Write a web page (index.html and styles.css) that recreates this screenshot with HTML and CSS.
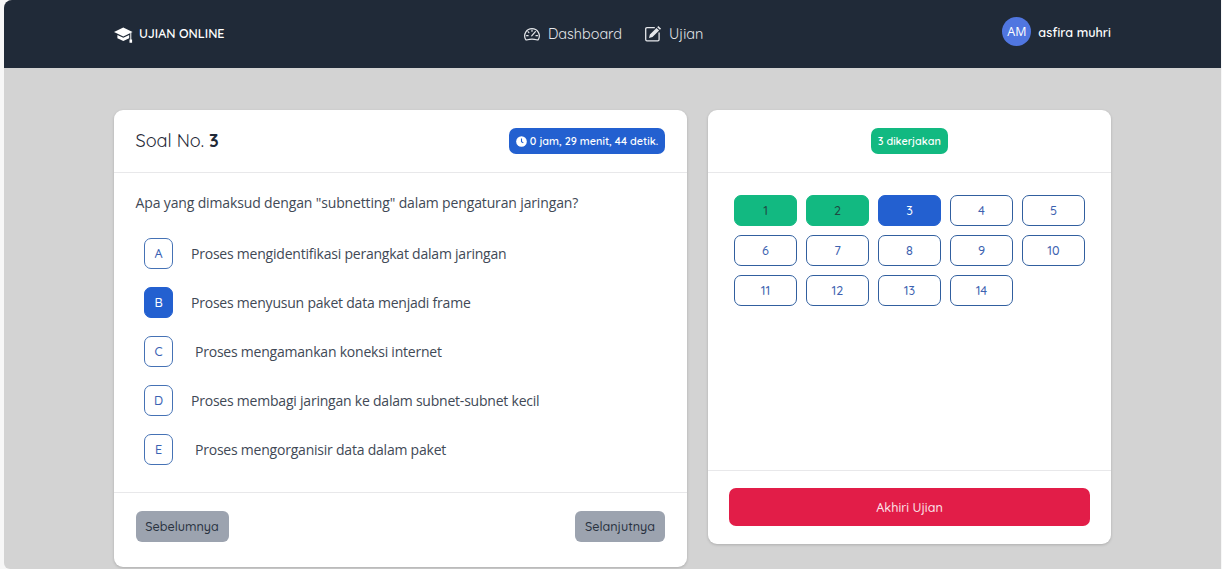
FILE: index.html
```html
<!DOCTYPE html>
<html lang="id">
<head>
<meta charset="utf-8">
<title>Ujian Online</title>
<link rel="stylesheet" href="styles.css">
</head>
<body>
<div class="page">
  <header class="navbar">
    <div class="brand">
      <svg class="brand-icon" viewBox="0 0 19 16"><path fill="currentColor" d="M0 5 9.300.400 18.600 5 9.300 9.500Z"/><path fill="currentColor" d="M3.400 7.900 9.300 10.700l5.900-2.800V11.300L9.300 14 3.400 11.300ZM16.300 5.500h1V12.500h.8v3.300h-2.600v-3.300h.8Z"/></svg>
      <span class="brand-name">UJIAN ONLINE</span>
    </div>
    <nav class="menu">
      <a class="menu-item"><svg class="menu-icon" viewBox="0 0 18 16" fill="none" stroke="currentColor" stroke-width="1.200" stroke-linecap="round"><path d="M2.500 13.300A7.300 7.300 0 1 1 15.500 13.300Q14.800 14.300 13.500 13.800Q9 12.300 4.500 13.800Q3.200 14.300 2.500 13.300Z"/><path d="M9 4v1.300M5 5.700l.9.900M3.600 9.700h1.500M13 9.700h1.500M8.700 9.900l3.700-4.300" /></svg><span>Dashboard</span></a>
      <a class="menu-item"><svg class="menu-icon" viewBox="0 0 18 16" fill="none" stroke="currentColor" stroke-width="1.300"><path d="M10.800 1.700H3Q1.700 1.700 1.700 3v10.500q0 1.300 1.300 1.300h10.800q1.300 0 1.300-1.300V6.500"/><path fill="currentColor" stroke="none" d="M5 12 5.900 8.500 12.500 1.900 15.100 4.500 8.500 11.100ZM13.200 1.200 14.300.1 17.100 2.700 15.900 3.800Z"/></svg><span>Ujian</span></a>
    </nav>
    <div class="user"><span class="avatar">AM</span><span class="user-name">asfira muhri</span></div>
  </header>
  <main class="content">
    <section class="card question-card">
      <div class="card-head">
        <h1 class="title">Soal No. <b>3</b></h1>
        <span class="badge timer"><svg class="clock" viewBox="0 0 12 12"><circle cx="6" cy="6" r="5.800" fill="currentColor"/><path d="M6 2.700V6.200L8 7.500" fill="none" stroke="#2360d0" stroke-width="1.200"/></svg><span>0 jam, 29 menit, 44 detik.</span></span>
      </div>
      <div class="question-body">
        <p class="question">Apa yang dimaksud dengan "subnetting" dalam pengaturan jaringan?</p>
        <div class="options">
          <div class="option"><span class="letter">A</span><span class="answer">Proses mengidentifikasi perangkat dalam jaringan</span></div>
          <div class="option"><span class="letter chosen">B</span><span class="answer">Proses menyusun paket data menjadi frame</span></div>
          <div class="option wide"><span class="letter">C</span><span class="answer">Proses mengamankan koneksi internet</span></div>
          <div class="option"><span class="letter">D</span><span class="answer">Proses membagi jaringan ke dalam subnet-subnet kecil</span></div>
          <div class="option wide"><span class="letter">E</span><span class="answer">Proses mengorganisir data dalam paket</span></div>
        </div>
      </div>
      <div class="question-foot"><span class="btn prev">Sebelumnya</span><span class="btn next">Selanjutnya</span></div>
    </section>
    <section class="card numbers-card">
      <div class="card-head centered"><span class="badge done-badge">3 dikerjakan</span></div>
      <div class="numbers">
        <span class="num done">1</span><span class="num done">2</span><span class="num current">3</span><span class="num">4</span><span class="num">5</span>
        <span class="num">6</span><span class="num">7</span><span class="num">8</span><span class="num">9</span><span class="num">10</span>
        <span class="num">11</span><span class="num">12</span><span class="num">13</span><span class="num">14</span>
      </div>
      <div class="numbers-foot"><span class="finish">Akhiri Ujian</span></div>
    </section>
  </main>
</div>
</body>
</html>
```
FILE: styles.css
```css
* { box-sizing: border-box; }
body { margin: 0; height: 569px; overflow: hidden; background: #f7f7f7; font-family: Quicksand, Lato, sans-serif; color: #1f2937; }
.page { margin: 0 1px 0 4px; height: 569px; background: #d3d3d3; border-radius: 8px 0 0 6px; overflow: hidden; }
.navbar { height: 68px; background: #202a38; color: #fff; display: grid; grid-template-columns: 409px 1fr auto; padding: 0 110px; }
.brand { display: flex; align-items: center; gap: 6px; height: 66px; }
.brand-icon { width: 19px; height: 16px; margin-top: 4px; }
.brand-name { font-size: 12.6px; font-weight: 600; line-height: 20px; padding-bottom: 1px; }
.menu { display: flex; align-items: center; gap: 22px; height: 67px; color: #e5e7eb; font-size: 14.4px; line-height: 20px; font-weight: 450; }
.menu-item { display: flex; align-items: center; gap: 7px; }
.menu-icon { width: 18px; height: 16px; margin-top: 1px; }
.user { display: flex; align-items: center; gap: 7px; height: 63px; }
.avatar { width: 29px; height: 29px; border-radius: 50%; background: #5076e0; font: 12.5px/29px "Open Sans", sans-serif; text-align: center; }
.user-name { font-size: 12.6px; font-weight: 600; }
.content { display: flex; align-items: flex-start; gap: 21px; padding: 42px 110px 0; }
.card { background: #fff; border-radius: 9px; box-shadow: 0 1px 3px rgba(0,0,0,.18); }
.question-card { width: 573px; height: 457px; }
.numbers-card { width: 403px; height: 434px; }
.card-head { height: 63px; border-bottom: 1px solid #e8e8ea; display: flex; align-items: center; justify-content: space-between; padding: 0 22px 0 21.5px; }
.card-head.centered { justify-content: center; }
.title { margin: 0; font-size: 18.1px; font-weight: 450; line-height: 24px; }
.badge { height: 26px; border-radius: 7px; color: #fff; display: flex; align-items: center; justify-content: center; font-size: 10.8px; font-weight: 600; white-space: nowrap; }
.timer { width: 156px; background: #2360d0; gap: 3px; }
.clock { width: 11px; height: 11px; }
.done-badge { width: 77px; background: #12b981; }
.question-body { height: 320px; border-bottom: 1px solid #e8e8ea; padding: 19px 22px 0 21.5px; }
.question { margin: 0; font: 14px/22px "Segoe UI", "Open Sans", sans-serif; letter-spacing: -.14px; color: #414956; white-space: nowrap; }
.options { display: grid; gap: 17px; padding: 23px 0 0 8.5px; }
.option { display: flex; align-items: center; gap: 18px; height: 32px; }
.option.wide { gap: 22px; }
.letter { width: 29px; height: 31px; border: 1px solid #4572b5; border-radius: 7px; color: #3a62b3; display: flex; align-items: center; justify-content: center; font-size: 12.6px; font-weight: 500; }
.letter.chosen { background: #2360d0; border-color: #2360d0; color: #fff; }
.answer { font: 14px/22px "Segoe UI", "Open Sans", sans-serif; letter-spacing: -.22px; color: #414956; white-space: nowrap; padding-top: 2px; }
.question-foot { display: flex; justify-content: space-between; padding: 18px 22px 17px 21.5px; }
.btn { height: 31px; border-radius: 6px; background: #9ca3af; display: flex; align-items: center; justify-content: center; font-size: 12.6px; font-weight: 500; color: #29323f; padding-bottom: 2px; }
.prev { width: 93px; }
.next { width: 90px; }
.numbers { height: 298px; border-bottom: 1px solid #e8e8ea; padding: 22px 26px; display: grid; grid-template-columns: repeat(5, 63px); grid-auto-rows: 31px; gap: 9px; align-content: start; }
.num { border: 1px solid #315f9f; border-radius: 7px; color: #3d62b0; display: flex; align-items: center; justify-content: center; font-size: 12.6px; font-weight: 500; padding-bottom: 1px; }
.num.done { background: #12b981; border-color: #12b981; color: #1f4941; }
.num.current { background: #2360d0; border-color: #2360d0; color: #fff; }
.numbers-foot { padding: 17px 21px; }
.finish { height: 38px; border-radius: 7px; background: #e21d48; color: #fbe4ea; display: flex; align-items: center; justify-content: center; font-size: 12.6px; font-weight: 500; }
```
